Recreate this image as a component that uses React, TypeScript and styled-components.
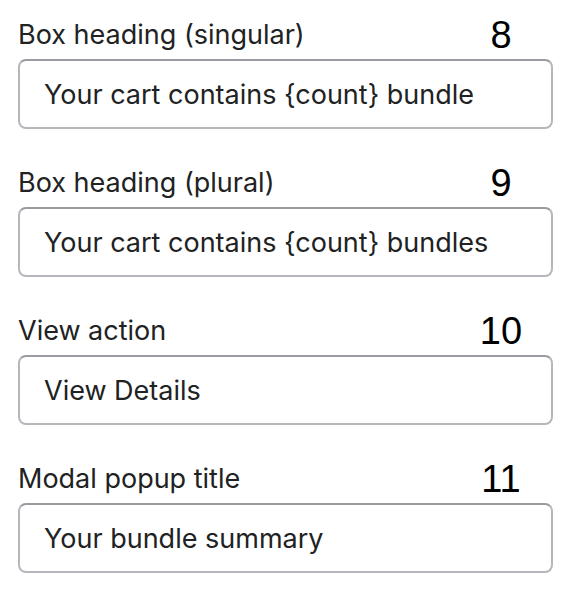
import React from 'react';
import styled, {createGlobalStyle} from 'styled-components';

const GlobalStyle = createGlobalStyle`
  body {
    margin: 0;
    background: #ffffff;
    font-family: Inter, "Noto Sans", sans-serif;
    color: #202223;
  }
`;

const Page = styled.div`
  display: flex;
  flex-direction: column;
  gap: 34px;
  padding: 15px 17px 0 18px;
`;

const Field = styled.div`
  display: flex;
  flex-direction: column;
  gap: 4px;
`;

const LabelRow = styled.div`
  display: flex;
  justify-content: space-between;
  align-items: center;
  height: 40px;
`;

const Label = styled.label`
  font-size: 27px;
  line-height: 40px;
  color: #202223;
`;

const Number = styled.span`
  width: 70px;
  margin-right: 17px;
  text-align: center;
  font-family: "Liberation Sans", Arial, sans-serif;
  font-size: 38px;
  line-height: 40px;
  color: #000000;
`;

const Input = styled.input`
  box-sizing: border-box;
  width: 100%;
  height: 70px;
  padding: 0 24px;
  border: 2px solid #b4b8bd;
  border-top-color: #989ca1;
  border-radius: 8px;
  font-family: Inter, "Noto Sans", sans-serif;
  font-size: 27px;
  color: #202223;
  background: #ffffff;
  outline: none;
`;

const fields = [
  {label: 'Box heading (singular)', num: 8, value: 'Your cart contains {count} bundle'},
  {label: 'Box heading (plural)', num: 9, value: 'Your cart contains {count} bundles'},
  {label: 'View action', num: 10, value: 'View Details'},
  {label: 'Modal popup title', num: 11, value: 'Your bundle summary'},
];

const App = () => (
  <>
    <GlobalStyle />
    <Page>
      {fields.map(({label, num, value}) => (
        <Field key={num}>
          <LabelRow>
            <Label>{label}</Label>
            <Number>{num}</Number>
          </LabelRow>
          <Input defaultValue={value} readOnly />
        </Field>
      ))}
    </Page>
  </>
);

export default App;
